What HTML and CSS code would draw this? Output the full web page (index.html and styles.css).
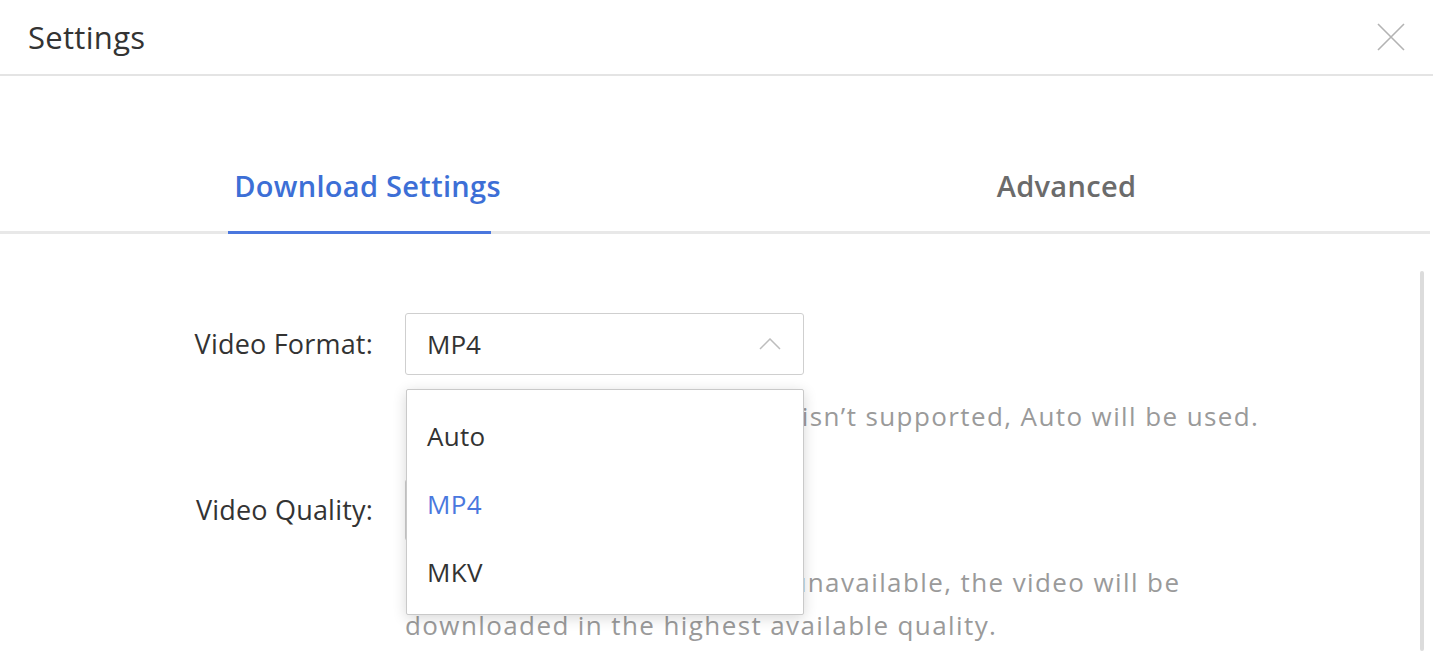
FILE: index.html
```html
<!DOCTYPE html>
<html>
<head>
    <meta charset="utf-8" />
    <title>Settings</title>
    <link rel="stylesheet" href="styles.css">
</head>
<body>
    <div class="dialog">
        <header class="dialog-head">
            <div class="dialog-title">Settings</div>
            <div class="dialog-close">
                <svg width="28" height="28" viewBox="0 0 28 28">
                    <path d="M1 1 L27 27 M27 1 L1 27" stroke="#b3b3b3" stroke-width="1.6" fill="none" />
                </svg>
            </div>
        </header>

        <div class="tabs">
            <div class="tab active"><span class="tab-label">Download Settings</span></div>
            <div class="tab"><span class="tab-label">Advanced</span></div>
        </div>

        <div class="dialog-body">
            <div class="form">
                <div class="form-row">
                    <div class="form-label">Video Format:</div>
                    <div class="form-field">
                        <div class="select open">
                            <span class="select-value">MP4</span>
                            <svg class="select-arrow" width="22" height="12" viewBox="0 0 22 12">
                                <path d="M1 11 L11 1 L21 11" stroke="#bdbdbd" stroke-width="1.5" fill="none" />
                            </svg>
                            <div class="dropdown">
                                <div class="dropdown-item">Auto</div>
                                <div class="dropdown-item selected">MP4</div>
                                <div class="dropdown-item">MKV</div>
                            </div>
                        </div>
                        <div class="form-hint">If the selected output format isn’t supported, Auto will be used.</div>
                    </div>
                </div>
                <div class="form-row">
                    <div class="form-label">Video Quality:</div>
                    <div class="form-field">
                        <div class="select">
                            <span class="select-value">1080p</span>
                            <svg class="select-arrow" width="22" height="12" viewBox="0 0 22 12">
                                <path d="M1 1 L11 11 L21 1" stroke="#bdbdbd" stroke-width="1.5" fill="none" />
                            </svg>
                        </div>
                        <div class="form-hint">If the quality you selected is unavailable, the video will be downloaded in the highest available quality.</div>
                    </div>
                </div>
            </div>
            <div class="scrollbar"><div class="scrollbar-thumb"></div></div>
        </div>
    </div>
</body>
</html>
```

FILE: styles.css
```css
html, body {
    margin: 0;
    height: 100%;
    background-color: #fff;
}

body {
    font-family: "Open Sans", "Liberation Sans", sans-serif;
    color: #333;
    overflow: hidden;
}

.dialog {
    height: 100%;
    display: flex;
    flex-direction: column;
}

/* 顶部标题栏 */
.dialog-head {
    height: 74px;
    flex-shrink: 0;
    display: flex;
    align-items: center;
    justify-content: space-between;
    padding: 0 28px 0 28px;
    border-bottom: 2px solid #e4e4e4;
}

.dialog-title {
    font-size: 31px;
    color: #333;
    letter-spacing: 0.3px;
}

.dialog-close {
    width: 28px;
    height: 28px;
    cursor: pointer;
}

.dialog-close svg {
    display: block;
}

/* 标签页 */
.tabs {
    display: flex;
    margin-top: 90px;
    margin-right: 3px;
    padding: 0 14px 0 18px;
    border-bottom: 3px solid #e8e8e8;
}

.tab {
    flex: 1;
    display: flex;
    justify-content: center;
    font-size: 29px;
    line-height: 40px;
    font-weight: 600;
    color: #6b6b6b;
    letter-spacing: 0.3px;
    cursor: pointer;
}

.tab-label {
    position: relative;
    padding-bottom: 25px;
}

.tab.active {
    color: #3d6fd6;
}

.tab.active .tab-label::after {
    content: "";
    position: absolute;
    left: -6px;
    right: 10px;
    bottom: -3px;
    height: 3px;
    background: #4a77de;
}

/* 内容区 */
.dialog-body {
    flex: 1;
    display: flex;
    min-height: 0;
}

.form {
    flex: 1;
    padding-top: 79px;
    display: flex;
    flex-direction: column;
    gap: 41px;
}

.form-row {
    display: grid;
    grid-template-columns: 373px 1fr;
    column-gap: 32px;
}

.form-label {
    height: 62px;
    line-height: 62px;
    text-align: right;
    font-size: 27px;
    color: #333;
    letter-spacing: 0.2px;
}

.form-field {
    max-width: 880px;
}

.select {
    position: relative;
    width: 399px;
    height: 62px;
    box-sizing: border-box;
    border: 1px solid #cfcfcf;
    border-radius: 3px;
    display: flex;
    align-items: center;
    justify-content: space-between;
    padding: 0 22px 0 21px;
    font-size: 26px;
    color: #333;
    background: #fff;
}

.select-arrow {
    display: block;
}

.form-hint {
    margin-top: 20px;
    font-size: 26px;
    line-height: 43px;
    color: #9a9a9a;
    letter-spacing: 1.4px;
}

/* 下拉菜单 */
.dropdown {
    position: absolute;
    top: 75px;
    left: 0;
    width: 398px;
    box-sizing: border-box;
    padding: 12px 0 8px;
    background: #fff;
    border: 1px solid #c9c9c9;
    border-radius: 2px;
    box-shadow: 0 3px 14px rgba(0, 0, 0, 0.16);
    z-index: 10;
}

.dropdown-item {
    height: 68px;
    line-height: 68px;
    padding-left: 20px;
    font-size: 26px;
    color: #333;
    letter-spacing: 0.3px;
}

.dropdown-item.selected {
    color: #4a78de;
}

/* 滚动条 */
.scrollbar {
    width: 4px;
    margin-right: 9px;
    padding-top: 37px;
}

.scrollbar-thumb {
    height: 100%;
    background: #dcdcdc;
    border-radius: 2px;
}
```
